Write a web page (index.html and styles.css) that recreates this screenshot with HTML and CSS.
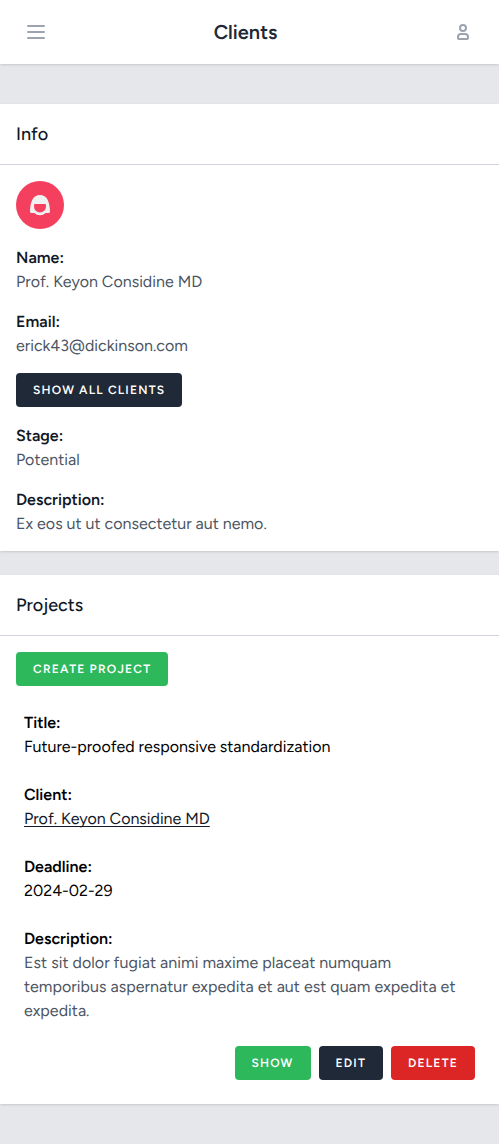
FILE: index.html
```html
<!DOCTYPE html>
<html lang="en">
<head>
<meta charset="utf-8">
<title>Clients</title>
<link rel="stylesheet" href="styles.css">
</head>
<body>
<header class="navbar">
  <button class="icon-button" aria-label="Menu"><svg viewBox="0 0 24 24"><path d="M4 6h16M4 12h16M4 18h16"/></svg></button>
  <h1>Clients</h1>
  <button class="icon-button user" aria-label="Account"><svg viewBox="0 0 16 20"><circle cx="8" cy="6" r="3"/><path d="M6 12h4a3 3 0 0 1 3 3v1a1 1 0 0 1-1 1H4a1 1 0 0 1-1-1v-1a3 3 0 0 1 3-3z"/></svg></button>
</header>
<main>
  <section class="card">
    <h2>Info</h2>
    <div class="card-body">
      <div class="avatar"><svg viewBox="0 0 48 48"><path d="M24 14c-7 0-9.700 6.500-10 16.500q0 1.500 1.300 1.500h3q2.400 2.200 5.700 2.200t5.700-2.200h3q1.300 0 1.300-1.500c-.3-10-3-16.500-10-16.500zM19 23h10q1 0 1 1v1.600a6 6 0 0 1-12 0v-1.600q0-1 1-1z"/></svg></div>
      <dl class="info">
        <div><dt>Name:</dt><dd>Prof. Keyon Considine MD</dd></div>
        <div><dt>Email:</dt><dd>erick43@dickinson.com</dd></div>
      </dl>
      <a class="btn dark">Show all clients</a>
      <dl class="info">
        <div><dt>Stage:</dt><dd>Potential</dd></div>
        <div><dt>Description:</dt><dd>Ex eos ut ut consectetur aut nemo.</dd></div>
      </dl>
    </div>
  </section>
  <section class="card">
    <h2>Projects</h2>
    <div class="card-body">
      <a class="btn green">Create project</a>
      <article class="project">
        <dl>
          <div><dt>Title:</dt><dd>Future-proofed responsive standardization</dd></div>
          <div><dt>Client:</dt><dd><a class="link">Prof. Keyon Considine MD</a></dd></div>
          <div><dt>Deadline:</dt><dd>2024-02-29</dd></div>
          <div><dt>Description:</dt><dd class="muted">Est sit dolor fugiat animi maxime placeat numquam temporibus aspernatur expedita et aut est quam expedita et expedita.</dd></div>
        </dl>
        <div class="actions"><a class="btn green">Show</a><a class="btn dark">Edit</a><a class="btn red">Delete</a></div>
      </article>
    </div>
  </section>
</main>
</body>
</html>
```
FILE: styles.css
```css
* { box-sizing: border-box; margin: 0; padding: 0; }
body {
  min-height: 1144px;
  background: #e5e7eb;
  font: 16px/24px Figtree, "Open Sans", sans-serif;
  color: #111827;
  text-rendering: geometricPrecision;
  -webkit-font-smoothing: antialiased;
}
.navbar {
  display: flex;
  align-items: center;
  justify-content: space-between;
  height: 64px;
  padding: 0 16px;
  background: #fff;
  box-shadow: 0 1px 3px rgb(0 0 0 / .1), 0 1px 2px -1px rgb(0 0 0 / .1);
}
.navbar h1 { margin-right: 8px; font-size: 20px; line-height: 28px; font-weight: 600; color: #1f2937; }
.icon-button {
  display: flex;
  align-items: center;
  justify-content: center;
  width: 40px;
  height: 40px;
  border: 0;
  background: none;
}
.icon-button svg { width: 24px; height: 24px; fill: none; stroke: #9ca3af; stroke-width: 2; stroke-linecap: round; }
.icon-button.user svg { width: 16px; height: 20px; }
main { display: flex; flex-direction: column; gap: 24px; padding-top: 40px; }
.card { background: #fff; box-shadow: 0 1px 3px rgb(0 0 0 / .1), 0 1px 2px -1px rgb(0 0 0 / .1); }
.card h2 {
  padding: 16px;
  border-bottom: 1px solid #d1d5db;
  font-size: 18px;
  line-height: 28px;
  font-weight: 500;
}
.card-body { display: flex; flex-direction: column; align-items: flex-start; gap: 16px; padding: 16px; }
.avatar { width: 48px; height: 48px; border-radius: 50%; background: #f43f5e; }
.avatar svg { display: block; fill: #f0f0f0; fill-rule: evenodd; }
dl { display: flex; flex-direction: column; gap: 16px; padding-top: 1px; margin-bottom: -1px; }
dt { font-weight: 600; }
.info dd, .muted { color: #4b5563; }
.info dd { letter-spacing: .02px; }
.muted { max-width: 440px; letter-spacing: .05px; }
.btn {
  display: inline-block;
  padding: 8px 16px;
  border: 1px solid transparent;
  border-radius: 4px;
  color: #fff;
  font-size: 12px;
  line-height: 16px;
  font-weight: 600;
  letter-spacing: 1.2px;
  text-transform: uppercase;
}
.dark { background: #1f2937; }
.green { background: #2eb85c; }
.red { background: #dc2626; }
.project { width: 100%; padding: 8px; color: #000; }
.project dl { gap: 24px; }
.link { color: #111827; text-decoration: underline; text-underline-offset: 2px; text-decoration-skip-ink: none; }
.actions { display: flex; justify-content: flex-end; gap: 8px; padding-top: 24px; }
.actions .green { padding-left: 15.5px; }
```
